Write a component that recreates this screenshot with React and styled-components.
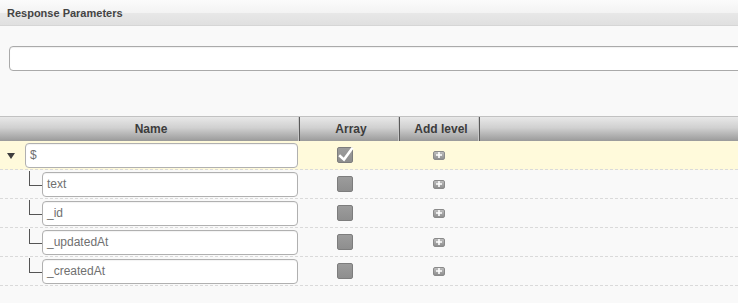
import styled, { createGlobalStyle } from "styled-components";

const GlobalStyle = createGlobalStyle`
    body {
        margin: 0;
        background: #f9f9f9;
        font-family: "Liberation Sans", Helvetica, Arial, sans-serif;
    }
`;

const Panel = styled.div`
    width: 738px;
    height: 303px;
    overflow: hidden;
    background: #f9f9f9;
`;

const TitleBar = styled.div`
    height: 25px;
    display: flex;
    align-items: center;
    padding-left: 7px;
    background: linear-gradient(#fbfbfb 0%, #f3f3f3 50%, #e8e8e8 52%, #e0e0e0 100%);
    border-bottom: 1px solid #d6d6d6;
    font-size: 11px;
    font-weight: 700;
    color: #444;
`;

const SearchArea = styled.div`
    padding: 20px 0 0 9px;
    height: 70px;
    box-sizing: border-box;
    margin-bottom: 20px;
`;

const SearchInput = styled.div`
    height: 25px;
    width: 760px;
    box-sizing: border-box;
    background: #fff;
    border: 1px solid #aaa;
    border-radius: 4px;
    box-shadow: inset 0 1px 1px rgba(0,0,0,0.06);
`;

const COLS = "300px 100px 80px 1fr";

const HeaderRow = styled.div`
    display: grid;
    grid-template-columns: ${COLS};
    height: 24px;
    border-top: 1px solid #c2c2c2;
    background: linear-gradient(#e8e8e8 0%, #d0d0d0 45%, #9a9a9a 100%);
`;

const HeaderCell = styled.div`
    display: flex;
    align-items: center;
    justify-content: center;
    font-size: 12px;
    font-weight: 700;
    color: #3c3c3c;
    border-right: ${(p) => (p.$last ? "none" : "1px solid #5a5a5a")};
    box-shadow: ${(p) => (p.$last ? "none" : "inset -1px 0 0 #c8c8c8")};
    padding-left: 3px;
`;

const Row = styled.div`
    display: grid;
    grid-template-columns: ${COLS};
    height: 29px;
    box-sizing: border-box;
    border-bottom: 1px dashed #dadada;
    background: ${(p) => (p.$selected ? "#fffadb" : "transparent")};
`;

const NameCell = styled.div`
    display: flex;
    align-items: center;
    padding-left: ${(p) => p.$indent}px;
    padding-right: 2px;
`;

const Toggle = styled.div`
    width: 25px;
    display: flex;
    justify-content: center;
    &::before {
        content: "";
        border-left: 4.5px solid transparent;
        border-right: 4.5px solid transparent;
        border-top: 6px solid #3e3e3e;
        margin-left: -4px;
        margin-top: 1px;
    }
`;

const Connector = styled.div`
    align-self: flex-start;
    width: 13px;
    height: 15px;
    margin-top: 1px;
    box-sizing: border-box;
    border-left: 1px solid #555;
    border-bottom: 1px solid #555;
`;

const NameInput = styled.div`
    flex: 1;
    height: 25px;
    box-sizing: border-box;
    display: flex;
    align-items: center;
    padding-left: 4px;
    background: #fff;
    border: 1px solid #b0b0b0;
    border-radius: 4px;
    box-shadow: inset 0 1px 1px rgba(0,0,0,0.05);
    font-size: 12px;
    color: #707070;
`;

const ArrayCell = styled.div`
    display: flex;
    align-items: center;
    padding-left: 37px;
`;

const Box = styled.div`
    position: relative;
    width: 16px;
    height: 16px;
    box-sizing: border-box;
    border: 1px solid #7d7d7d;
    border-radius: 2px;
    background: linear-gradient(#9c9c9c, #8e8e8e);
`;

const Tick = styled.svg`
    position: absolute;
    left: -1px;
    top: -1px;
    overflow: visible;
`;

const AddCell = styled.div`
    display: flex;
    align-items: center;
    padding-left: 33px;
`;

const AddButton = styled.div`
    width: 12px;
    height: 9px;
    box-sizing: border-box;
    border-radius: 2px;
    border: 1px solid #8a8a8a;
    background: linear-gradient(#bdbdbd, #8f8f8f);
    display: flex;
    align-items: center;
    justify-content: center;
`;

const params = [
    { name: "$", root: true, array: true },
    { name: "text" },
    { name: "_id" },
    { name: "_updatedAt" },
    { name: "_createdAt" },
];

function Checkbox({ checked }) {
    return (
        <Box>
            {checked && (
                <Tick width="16" height="16" viewBox="0 0 16 16">
                    <path d="M2.2 8.2 L7 12.6 L15.6 0.8" fill="none" stroke="#fff" strokeWidth="2.6" />
                </Tick>
            )}
        </Box>
    );
}

function Plus() {
    return (
        <AddButton>
            <svg width="6" height="6" viewBox="0 0 6 6">
                <path d="M3 0 V6 M0 3 H6" stroke="#fff" strokeWidth="1.6" />
            </svg>
        </AddButton>
    );
}

export default function App() {
    return (
        <Panel>
            <GlobalStyle />
            <TitleBar>Response Parameters</TitleBar>
            <SearchArea>
                <SearchInput />
            </SearchArea>
            <HeaderRow>
                <HeaderCell>Name</HeaderCell>
                <HeaderCell>Array</HeaderCell>
                <HeaderCell>Add level</HeaderCell>
                <HeaderCell $last />
            </HeaderRow>
            {params.map((p) => (
                <Row key={p.name} $selected={p.root}>
                    <NameCell $indent={p.root ? 0 : 29}>
                        {p.root ? <Toggle /> : <Connector />}
                        <NameInput>{p.name}</NameInput>
                    </NameCell>
                    <ArrayCell>
                        <Checkbox checked={p.array} />
                    </ArrayCell>
                    <AddCell>
                        <Plus />
                    </AddCell>
                    <div />
                </Row>
            ))}
        </Panel>
    );
}
